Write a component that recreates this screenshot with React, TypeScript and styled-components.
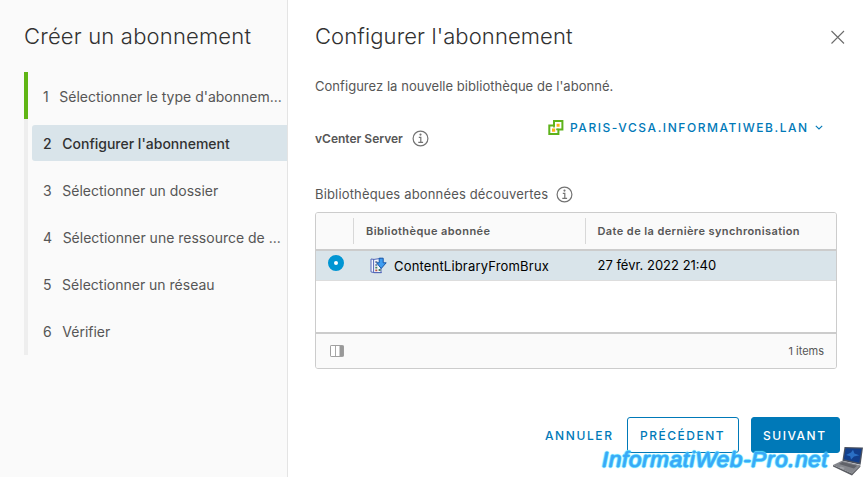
import React from 'react';
import styled, { createGlobalStyle, css } from 'styled-components';

const GlobalStyle = createGlobalStyle`
  * { box-sizing: border-box; }
  html, body { margin: 0; background: #fff; }
  body { font-family: Inter, "Open Sans", sans-serif; color: #565656; overflow: hidden; }
`;

const Wizard = styled.div`
  position: relative;
  display: flex;
  width: 864px;
  height: 477px;
  overflow: hidden;
`;

const Sidebar = styled.nav`
  width: 288px;
  flex: none;
  background: #fafafa;
  border-right: 1px solid #e4e4e4;
  padding-top: 20px;
`;

const Title = styled.h1<{ $spacing: string }>`
  margin: 0;
  height: 32px;
  line-height: 32px;
  font-size: 22px;
  font-weight: 300;
  letter-spacing: ${(p) => p.$spacing};
  color: #313131;
  white-space: nowrap;
`;

const SidebarTitle = styled(Title)`
  padding-left: 24px;
`;

const StepList = styled.ol`
  list-style: none;
  margin: 20px 0 0;
  padding: 0 0 0 24px;
`;

const Step = styled.li<{ $done?: boolean; $last?: boolean }>`
  display: flex;
  align-items: center;
  height: ${(p) => (p.$last ? 48 : 47)}px;
  border-left: 4px solid ${(p) => (p.$done ? '#60b515' : '#eeeeee')};
  padding: 0 0 ${(p) => (p.$last ? 1 : 0)}px 4px;
`;

const StepLabel = styled.span<{ $active?: boolean }>`
  display: flex;
  align-items: center;
  gap: 10.6px;
  flex: 1;
  height: 36px;
  padding: 2px 0 0 11px;
  border-radius: 3px 0 0 3px;
  font-size: 14px;
  white-space: nowrap;
  ${(p) =>
    p.$active &&
    css`
      background: #d9e4ea;
      color: #313131;
      font-weight: 500;
    `}
`;

const Main = styled.main`
  flex: 1;
  display: flex;
  flex-direction: column;
  padding: 20px 24px 0 27px;
`;

const Header = styled.header`
  display: flex;
  justify-content: space-between;
  align-items: center;
  height: 32px;
`;

const CloseButton = styled.button`
  display: flex;
  padding: 0;
  margin: 2px -6px 0 0;
  border: 0;
  background: none;
`;

const Description = styled.p`
  margin: 23px 0 0;
  height: 22px;
  line-height: 22px;
  font-size: 13px;
  letter-spacing: 0.04px;
`;

const ServerRow = styled.div`
  display: flex;
  margin-top: 21px;
  height: 40px;
`;

const ServerLabel = styled.label`
  display: flex;
  align-items: center;
  gap: 9px;
  width: 233px;
  height: 41px;
  font-size: 12px;
  font-weight: 600;
`;

const ServerSelect = styled.button`
  display: flex;
  align-items: center;
  height: 19px;
  padding: 0;
  border: 0;
  background: none;
  font: 500 12px Inter, sans-serif;
  letter-spacing: 1.55px;
  color: #0079b8;
  white-space: nowrap;
  & > span { margin: 0 6px 0 5px; }
`;

const SectionLabel = styled.div`
  display: flex;
  align-items: center;
  gap: 8px;
  margin-top: 26px;
  height: 20px;
  font-size: 13px;
  letter-spacing: 0.16px;
`;

const Grid = styled.section`
  display: flex;
  flex-direction: column;
  width: 522px;
  height: 157px;
  margin-top: 8px;
  border: 1px solid #cccccc;
  border-radius: 3px;
  overflow: hidden;
  background: #fff;
`;

const GridHeader = styled.div`
  display: grid;
  grid-template-columns: 38px 232px 1fr;
  align-items: center;
  height: 38px;
  background: #fafafa;
  border-bottom: 2px solid #cccccc;
`;

const HeaderCell = styled.div`
  display: flex;
  align-items: center;
  height: 26px;
  border-right: 1px solid #d8d8d8;
  padding-left: 12px;
  font-size: 11px;
  font-weight: 600;
  letter-spacing: 0.43px;
  &:last-child { border-right: 0; padding-left: 11.5px; letter-spacing: 0.41px; }
`;

const GridRow = styled.div`
  display: grid;
  grid-template-columns: 38px 232px 1fr;
  height: 30px;
  background: #d9e4ea;
  border-bottom: 1px solid #dddddd;
  color: #000;
`;

const Cell = styled.div<{ $spacing?: string }>`
  display: flex;
  align-items: center;
  gap: 7px;
  padding-left: 11.5px;
  font-size: 13px;
  letter-spacing: ${(p) => p.$spacing ?? 'normal'};
`;

const LibraryCell = styled(Cell)`
  padding-left: 16px;
`;

const DateCell = styled(Cell)`
  padding-bottom: 1px;
`;

const RadioCell = styled.div`
  padding: 4px 0 0 12px;
`;

const Radio = styled.span`
  display: block;
  width: 16px;
  height: 16px;
  border: 6px solid #0095d3;
  border-radius: 50%;
  background: #fff;
`;

const GridFooter = styled.div`
  display: flex;
  justify-content: space-between;
  align-items: center;
  height: 36px;
  margin-top: auto;
  padding: 0 12px 0 14px;
  border-top: 2px solid #cccccc;
  background: #fafafa;
  font-size: 11px;
`;

const Actions = styled.footer`
  display: flex;
  justify-content: flex-end;
  gap: 12px;
  margin-top: 48px;
`;

const Button = styled.button<{ $kind: 'link' | 'outline' | 'primary' }>`
  height: 36px;
  padding: 1px 0 0 ${(p) => ({ link: 12, outline: 12, primary: 11 })[p.$kind]}px;
  border: 1px solid ${(p) => (p.$kind === 'link' ? 'transparent' : '#0079b8')};
  border-radius: 3px;
  background: ${(p) => (p.$kind === 'primary' ? '#0079b8' : 'transparent')};
  color: ${(p) => (p.$kind === 'primary' ? '#fff' : '#0079b8')};
  width: ${(p) => ({ link: 83, outline: 112, primary: 89 })[p.$kind]}px;
  text-align: left;
  font: 500 12px Inter, sans-serif;
  letter-spacing: ${(p) => (p.$kind === 'link' ? 1.6 : 1.5)}px;
  white-space: nowrap;
`;

const Watermark = styled.div`
  position: absolute;
  left: 602px;
  top: 446px;
  display: flex;
  align-items: flex-start;
  gap: 2px;
`;

const WatermarkText = styled.span`
  font: italic 400 22.5px/28px "Liberation Sans", Arial, sans-serif;
  width: 228px;
  letter-spacing: 0.65px;
  color: #38a8f8;
  -webkit-text-stroke: 0.6px #38a8f8;
  text-shadow: 0 0 1px #5fe3ff, 1px 0 1px #5fe3ff, -1px 0 1px #5fe3ff, 0 1px 1px #5fe3ff, 0 -1px 1px #5fe3ff;
  white-space: nowrap;
`;

const InfoIcon = () => (
  <svg width="17" height="17" viewBox="0 0 17 17" fill="none" stroke="#737373" strokeWidth="1.2">
    <circle cx="8.5" cy="8.5" r="7.4" />
    <path d="M6.8 7.3h2v5M6.3 12.4h4.8" />
    <circle cx="8.5" cy="4.6" r=".5" />
  </svg>
);

const CloseIcon = () => (
  <svg width="16" height="16" viewBox="0 0 16 16" stroke="#6b6b6b" strokeWidth="1.1">
    <path d="M1.5 2L14 14.5M14 2L1.5 14.5" />
  </svg>
);

const ServerIcon = () => (
  <svg width="17" height="17" viewBox="0 0 17 17">
    <path d="M6 2h8.4v8.4h-4V15H1.3V6.4H6z" fill="#fff" stroke="#5eb31c" strokeWidth="2" />
    <path d="M6 6.4v2M8.2 10.4h2.2" stroke="#5eb31c" strokeWidth="1.6" />
    <path d="M8.6 4.8h3v3h-3zM4 9.6h3.2v3.2H4z" fill="#fdb515" />
  </svg>
);

const ChevronIcon = () => (
  <svg width="8" height="6" viewBox="0 0 8 6" fill="none" stroke="#0079b8" strokeWidth="1.1">
    <path d="M.8 .8L4 4 7.2 .8" />
  </svg>
);

const LibraryIcon = () => (
  <svg width="17" height="17" viewBox="0 0 17 17">
    <path d="M1 2l3 .4 7-1v14.2H4l-3-.7z" fill="#f4f7fc" stroke="#5468b8" />
    <path d="M3.6 2v13.6h8.2" fill="none" stroke="#5468b8" />
    <path d="M5.3 5h2M5.3 8h2" stroke="#5a6b88" strokeWidth="1.6" />
    <path d="M5.3 10.6h2M8.6 13h2" stroke="#468562" strokeWidth="1.8" />
    <path d="M5.3 13.3h2" stroke="#b65346" strokeWidth="1.8" />
    <path d="M9.2 1.2h4v4.6h3L11.2 11.5 6.6 5.8h2.6z" fill="#3f9df0" stroke="#1656a8" />
  </svg>
);

const ColumnsIcon = () => (
  <svg width="14" height="12" viewBox="0 0 14 12">
    <rect x=".5" y=".5" width="13" height="11" rx=".6" fill="#fff" stroke="#a0a0a0" />
    <path d="M5.5 1v10" stroke="#a8a8a8" />
    <path d="M9.5 1h4v10h-4z" fill="#999" />
  </svg>
);

const LaptopIcon = () => (
  <svg width="32" height="31" viewBox="0 0 32 31">
    <path d="M12.5 1l18.5.4-2.4 17.4-18.2-4z" fill="#4a5160" />
    <path d="M13.6 2.2l16 .5-2.3 14-15.4-3.5z" fill="#123f8c" />
    <path d="M14 9l5-2.4 2-2.8 1.4 3.6 5 1.8-5.4 1.2-3 3-.8-3.2z" fill="#2a6fc4" />
    <path d="M10 14.8l18.4 4.4-8.4 8.4L1 19z" fill="#85878d" />
    <path d="M10.4 16l14.6 3.8-3 2.8L7 18z" fill="#606269" />
    <path d="M1 19l19 8.6 8.4-8.4v1.6L20 29.6 1 20.6z" fill="#5a5c62" />
    <path d="M9 20.4l4 1.5-2 1.4-4-1.7z" fill="#a1a3a8" />
  </svg>
);

const steps = [
  'Sélectionner le type d\'abonnem...',
  'Configurer l\'abonnement',
  'Sélectionner un dossier',
  'Sélectionner une ressource de ...',
  'Sélectionner un réseau',
  'Vérifier',
];

export default function App() {
  return (
    <>
      <GlobalStyle />
      <Wizard>
        <Sidebar>
          <SidebarTitle $spacing="0.18px">Créer un abonnement</SidebarTitle>
          <StepList>
            {steps.map((label, i) => (
              <Step key={label} $done={i === 0} $last={i === steps.length - 1}>
                <StepLabel $active={i === 1}>
                  <span>{i + 1}</span>
                  <span>{label}</span>
                </StepLabel>
              </Step>
            ))}
          </StepList>
        </Sidebar>
        <Main>
          <Header>
            <Title $spacing="0.1px">Configurer l'abonnement</Title>
            <CloseButton aria-label="Fermer">
              <CloseIcon />
            </CloseButton>
          </Header>
          <Description>Configurez la nouvelle bibliothèque de l'abonné.</Description>
          <ServerRow>
            <ServerLabel>
              vCenter Server
              <InfoIcon />
            </ServerLabel>
            <ServerSelect>
              <ServerIcon />
              <span>PARIS-VCSA.INFORMATIWEB.LAN</span>
              <ChevronIcon />
            </ServerSelect>
          </ServerRow>
          <SectionLabel>
            Bibliothèques abonnées découvertes
            <InfoIcon />
          </SectionLabel>
          <Grid>
            <GridHeader>
              <HeaderCell />
              <HeaderCell>Bibliothèque abonnée</HeaderCell>
              <HeaderCell>Date de la dernière synchronisation</HeaderCell>
            </GridHeader>
            <GridRow>
              <RadioCell>
                <Radio />
              </RadioCell>
              <LibraryCell $spacing="0.18px">
                <LibraryIcon />
                ContentLibraryFromBrux
              </LibraryCell>
              <DateCell>27 févr. 2022 21:40</DateCell>
            </GridRow>
            <GridFooter>
              <ColumnsIcon />
              <span>1 items</span>
            </GridFooter>
          </Grid>
          <Actions>
            <Button $kind="link">ANNULER</Button>
            <Button $kind="outline">PRÉCÉDENT</Button>
            <Button $kind="primary">SUIVANT</Button>
          </Actions>
        </Main>
        <Watermark>
          <WatermarkText>InformatiWeb-Pro.net</WatermarkText>
          <LaptopIcon />
        </Watermark>
      </Wizard>
    </>
  );
}
